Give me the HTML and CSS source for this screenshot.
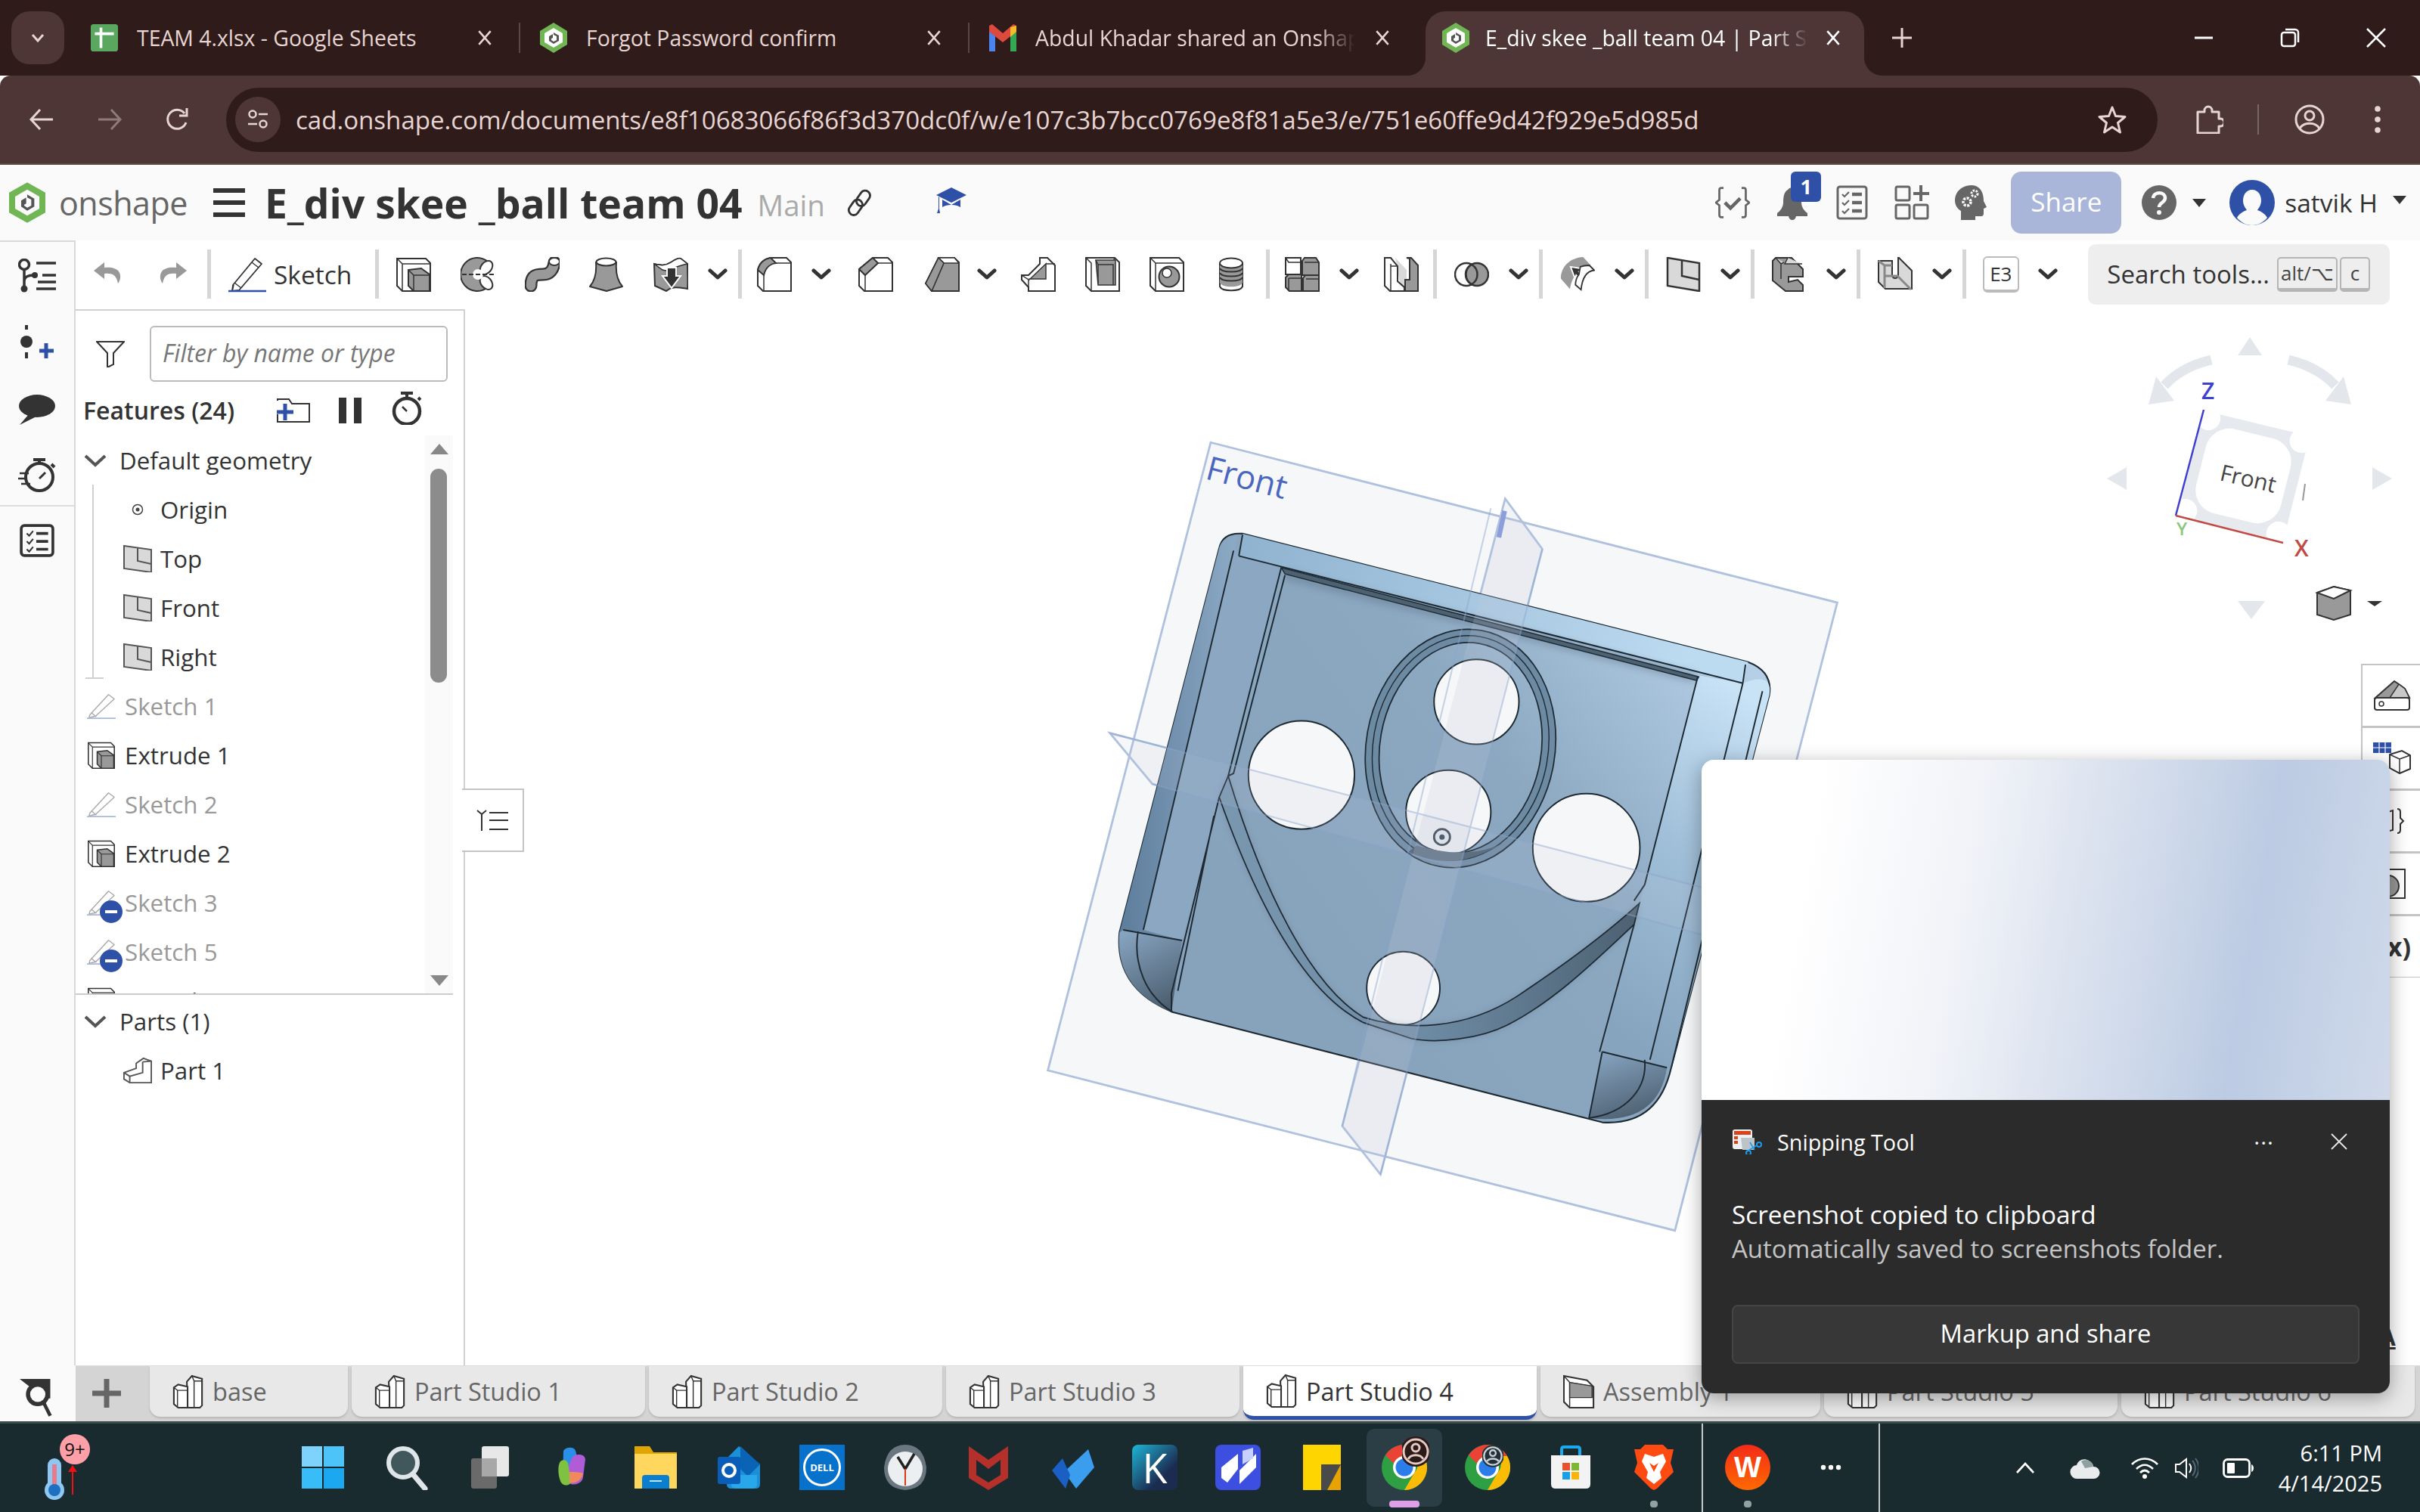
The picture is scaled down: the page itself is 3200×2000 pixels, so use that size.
FILE: index.html
```html
<!DOCTYPE html>
<html lang="en">
<head>
  <meta charset="UTF-8" />
  <title>E_div skee _ball team 04 | Part Studio 4</title>
  <link rel="stylesheet" href="styles.css">
</head>
<body>

  <!-- icon sheet -->
  <svg class="sprites" aria-hidden="true">
    <defs>
      <symbol id="fav-sheets" viewBox="0 0 40 40"><rect width="40" height="40" rx="4" fill="#5aa860"/><path d="M6 14h28M15 5v30" stroke="#fff" stroke-width="4"/></symbol>
      <symbol id="fav-shape" viewBox="0 0 36 40"><path d="M18 0 36 11v18L18 40 0 29V11z" fill="#70b654"/><path d="M18 7 30 14v12L18 33 6 26V14z" fill="#fff"/><path d="M18 13l7 4v7l-7 4-6-4v-6l5-3v5l-2 1v2l3 2 4-2v-5l-4-2z" fill="#555"/></symbol>
      <symbol id="fav-gmail" viewBox="0 0 36 40"><path d="M0 10v28h8V18z" fill="#4a84ee"/><path d="M28 18v20h8V10z" fill="#35a853"/><path d="M0 4v8l18 14 18-14V4l-4-2-14 12L4 2z" fill="#dc4a3d"/><path d="M28 6l8-2v8l-8 7z" fill="#f4bb2a"/></symbol>
      <symbol id="x-mark" viewBox="0 0 20 20"><path d="M3 2l14 16M17 2 3 18" fill="none" stroke="currentColor" stroke-width="2.4"/></symbol>
      <symbol id="chev" viewBox="0 0 26 16"><path d="M3 3l10 9 10-9" fill="none" stroke="#333" stroke-width="5" stroke-linecap="round" stroke-linejoin="round"/></symbol>

      <symbol id="i-extrude" viewBox="0 0 46 46"><path d="M1 2h38l6 6v37H8l-7-7z" fill="#fff" stroke="#333" stroke-width="2"/><path d="M1 2l7 7h37M8 9v36" fill="none" stroke="#333" stroke-width="1.5"/><path d="M16 17l17-2 11 8v22H23l-7-7z" fill="#999" stroke="#333" stroke-width="2"/><path d="M16 17l7 7h21M23 24v21" fill="none" stroke="#333" stroke-width="1.5"/></symbol>
      <symbol id="i-revolve" viewBox="0 0 46 46"><path d="M36 6A22 22 0 1 0 36 40L22 23z" fill="#999" stroke="#333" stroke-width="2"/><ellipse cx="34" cy="14" rx="7" ry="10" transform="rotate(40 34 14)" fill="#fff" stroke="#333" stroke-width="2"/><ellipse cx="34" cy="34" rx="7" ry="10" transform="rotate(-40 34 34)" fill="#fff" stroke="#333" stroke-width="2"/><circle cx="23" cy="23" r="7" fill="#fff"/><path d="M2 23h44" stroke="#333" stroke-width="2" stroke-dasharray="6 3"/></symbol>
      <symbol id="i-sweep" viewBox="0 0 46 46"><path d="M8 38C8 24 14 23 24 23 33 23 38 17 39 7" fill="none" stroke="#333" stroke-width="17" stroke-linecap="round"/><path d="M8 38C8 24 14 23 24 23 33 23 38 17 39 7" fill="none" stroke="#999" stroke-width="12.5" stroke-linecap="round"/><ellipse cx="39" cy="6" rx="7" ry="5" fill="#fff" stroke="#333" stroke-width="2"/></symbol>
      <symbol id="i-loft" viewBox="0 0 46 46"><path d="M9 7c1 12-1 24-8 32l22 6 21-6C37 31 35 19 36 7z" fill="#999" stroke="#333" stroke-width="2" stroke-linejoin="round"/><ellipse cx="22.500" cy="6.500" rx="13" ry="5" fill="#fff" stroke="#333" stroke-width="2"/></symbol>
      <symbol id="i-thicken" viewBox="0 0 46 46"><path d="M1 9c10 2 14 3 22-2 5-3 9-6 13-5l9 7c0 12 1 25 0 33-12-2-20-4-28 3L2 38z" fill="#999" stroke="#333" stroke-width="2"/><path d="M1 9c10 2 14 3 22-2 5-3 9-6 13-5l9 7c-8 2-14 3-20 7-3 2-7 3-13 1z" fill="#fff" stroke="#333" stroke-width="1.500"/><path d="M18 14h12v11h6L24 41 12 25h6z" fill="#333" stroke="#fff" stroke-width="2"/></symbol>
      <symbol id="i-fillet" viewBox="0 0 46 46"><path d="M1 17C3 8 10 2 18 1h21l6 6v38H8l-7-7z" fill="#fff" stroke="#333" stroke-width="2"/><path d="M1 17C3 8 10 2 18 1l7 7c-8 1-14 7-16 16z" fill="#999" stroke="#333" stroke-width="2"/><path d="M25 8h20M9 24v21" stroke="#333" stroke-width="1.500"/></symbol>
      <symbol id="i-chamfer" viewBox="0 0 46 46"><path d="M1 16 19 1h20l6 6v38H8l-7-7z" fill="#fff" stroke="#333" stroke-width="2"/><path d="M1 16 19 1l7 7L9 24z" fill="#999" stroke="#333" stroke-width="2"/><path d="M26 8h19M9 24v21" stroke="#333" stroke-width="1.500"/></symbol>
      <symbol id="i-draft" viewBox="0 0 46 46"><path d="M1 35 18 1h21l6 6v38H9z" fill="#999" stroke="#333" stroke-width="2"/><path d="M18 1l7 7h20l-6-7zM18 1l7 7L9 45 1 35z" fill="#fff" stroke="#333" stroke-width="1.500"/><path d="M18 1l7 7L9 45 1 35z" fill="#999" stroke="#333" stroke-width="1.500"/></symbol>
      <symbol id="i-rib" viewBox="0 0 46 46"><path d="M1 24V30l9 10v5h35V11L35 1H25v8L10 24z" fill="#fff" stroke="#333" stroke-width="2"/><path d="M11 30 33 9v20H11z" fill="#999" stroke="#333" stroke-width="1.500"/><path d="M1 24l9 6v15M33 9h12" fill="none" stroke="#333" stroke-width="1.500"/></symbol>
      <symbol id="i-shell" viewBox="0 0 46 46"><path d="M1 1h38l6 6v38H8l-7-7z" fill="#fff" stroke="#333" stroke-width="2"/><path d="M1 1l7 7v37M39 1l-3 7" fill="none" stroke="#333" stroke-width="1.500"/><path d="M14 4h26v33H17z" fill="#999" stroke="#333" stroke-width="1.500"/><path d="M14 4l3 6h20v27M17 10v25" fill="none" stroke="#333" stroke-width="1.500"/></symbol>
      <symbol id="i-hole" viewBox="0 0 46 46"><path d="M1 1h38l6 6v38H8l-7-7z" fill="#fff" stroke="#333" stroke-width="2"/><path d="M1 1l7 7h37M8 8v37" fill="none" stroke="#333" stroke-width="1.500"/><circle cx="26" cy="26" r="13.500" fill="#999" stroke="#333" stroke-width="2"/><circle cx="23" cy="21" r="6" fill="#fff" stroke="#333" stroke-width="1.500"/></symbol>
      <symbol id="i-thread" viewBox="0 0 46 46"><path d="M8 8v31c3 7 27 7 30 0V8" fill="#fff" stroke="#333" stroke-width="2"/><path d="M8 10v24c3 7 27 7 30 0V10z" fill="#999"/><path d="M8 15c3 6 27 6 30 0M8 21c3 6 27 6 30 0M8 27c3 6 27 6 30 0" fill="none" stroke="#333" stroke-width="2"/><ellipse cx="23" cy="8" rx="15" ry="6.500" fill="#fff" stroke="#333" stroke-width="2"/></symbol>
      <symbol id="i-pattern" viewBox="0 0 46 46"><path d="M1 1h20v22H1z" fill="#fff" stroke="#333" stroke-width="2"/><path d="M23 5l3-4h15l4 6v17H23z M1 27l4-4h17v22H6l-5-5z M24 28l3-4h18v21H24z" fill="#999" stroke="#333" stroke-width="2"/><path d="M1 1l4 6h17M26 7h19M5 28h17M5 28v17M28 29h17" fill="none" stroke="#333" stroke-width="1.500"/></symbol>
      <symbol id="i-split" viewBox="0 0 46 46"><path d="M15 1l15 16v28H23z" fill="#d9d9d9"/><path d="M1 1h8l9 11v20l9 8v5H8l-7-7z" fill="#fff" stroke="#333" stroke-width="2"/><path d="M30 1h6l9 10v34H28V30h6V2z" fill="#999" stroke="#333" stroke-width="2"/><path d="M9 9v36M18 12H9" fill="none" stroke="#333" stroke-width="1.500"/></symbol>
      <symbol id="i-bool" viewBox="0 0 46 46"><circle cx="16" cy="23" r="15" fill="#fff" stroke="#333" stroke-width="2.500"/><circle cx="30" cy="23" r="15" fill="#999" stroke="#333" stroke-width="2.500"/><path d="M23 10a15 15 0 0 1 0 26 15 15 0 0 1 0-26z" fill="#999" stroke="#333" stroke-width="2.500"/></symbol>
      <symbol id="i-transform" viewBox="0 0 50 50"><path d="M14 46 1 31C1 14 14 1 33 0l11 12C34 13 19 20 14 46z" fill="#999"/><path d="M21 30l-6-16 18 3-6 4 9 9-5 5-8-9z" fill="#333" stroke="#fff" stroke-width="2"/><path d="M29 14c5-2 9-2 13-2l7 7c-10 1-17 9-19 28l-8-7c0-7 2-11 5-15z" fill="#fff" stroke="#333" stroke-width="2"/></symbol>
      <symbol id="i-plane" viewBox="0 0 46 46"><path d="M2 1l42 7v37L2 38z" fill="#d9d9d9" stroke="#333" stroke-width="2.500"/><path d="M21 4v21l23 5" fill="none" stroke="#333" stroke-width="2.500"/></symbol>
      <symbol id="i-frame" viewBox="0 0 46 46"><path d="M1 5l4-4h21l15 15v10H22v7l12-3 7 7v8H18L1 31z" fill="#999" stroke="#333" stroke-width="2"/><path d="M5 1l7 8 4-2M12 9v20M21 1l-4 8h23" fill="#d9d9d9" stroke="#333" stroke-width="1.500"/></symbol>
      <symbol id="i-sheet" viewBox="0 0 46 46"><path d="M1 5h18v20c2 4 6 4 8 0V0l18 18v24H10L1 33z" fill="#d9d9d9" stroke="#333" stroke-width="2"/><path d="M1 5l8 6v30M9 11h10M10 25h16l18 18" fill="none" stroke="#888" stroke-width="3"/></symbol>

      <symbol id="i-sketch" viewBox="0 0 50 48"><path d="M6 38 35 3l9 7-30 35-9 1z" fill="#fff" stroke="#333" stroke-width="1.800" stroke-linejoin="round"/><path d="M8 35l9 7M31 8l9 7M5 46l2-8" fill="none" stroke="#333" stroke-width="1.500"/><path d="M0 46h50" stroke="#2e50a6" stroke-width="2.500"/></symbol>
      <symbol id="i-undo" viewBox="0 0 36 36"><path d="M14 2 0 13l14 11v-7c8-1 16 0 18 13 4-5 4-12 1-16-3-4-10-6-19-5z" fill="#999"/></symbol>
      <symbol id="i-studio" viewBox="0 0 44 46"><path d="M20 9l7-8 14 4v37l-3 3H21z" fill="#fff" stroke="#333" stroke-width="2.200"/><path d="M27 1l3 7h11M30 8v37" fill="none" stroke="#333" stroke-width="1.500"/><path d="M2 17l6-4 13 3v29H8l-6-5z" fill="#fff" stroke="#333" stroke-width="2.200"/><path d="M2 17l5 4h14M7 21v24" fill="none" stroke="#333" stroke-width="1.500"/></symbol>
      <symbol id="i-assembly" viewBox="0 0 44 46"><path d="M1 1l32 6 9 9v29H9l-8-8z" fill="#fff" stroke="#333" stroke-width="2.200"/><path d="M1 1l8 9v35M9 10l33 6" fill="none" stroke="#333" stroke-width="1.500"/><path d="M9 10l31 5v16H9z" fill="#999" stroke="#333" stroke-width="1.500"/></symbol>
      <symbol id="i-plane-small" viewBox="0 0 38 36"><path d="M1 1l36 5v30L1 31z" fill="#d9d9d9" stroke="#555" stroke-width="2"/><path d="M19 4v17l18 4" fill="none" stroke="#555" stroke-width="2"/></symbol>
      <symbol id="i-sketch-dim" viewBox="0 0 40 36"><path d="M4 30 30 2l8 6-26 24-9 2z" fill="#fff" stroke="#aaa" stroke-width="1.500" stroke-linejoin="round"/><path d="M6 27l7 6" stroke="#aaa" stroke-width="1.500"/><path d="M0 35h40" stroke="#a9b8dc" stroke-width="2"/></symbol>
      <symbol id="i-part" viewBox="0 0 40 36"><path d="M1 21l17-6V8l10-7 11 4v30H9l-8-5z" fill="#fff" stroke="#555" stroke-width="2"/><path d="M1 21l8 5 18-5V6M9 26v9M27 6l12-1" fill="none" stroke="#555" stroke-width="2"/></symbol>
    </defs>
  </svg>

  <!-- browser tabs -->
  <div class="tabstrip">
    <div class="tab-menu"><svg class="tab-menu-chev" viewBox="0 0 20 14"><path d="M3 3l7 8 7-8" fill="none" stroke="#e6d5d2" stroke-width="3"/></svg></div>
    <div class="tab tab-first">
      <svg class="favicon"><use href="#fav-sheets"/></svg>
      <span class="tab-title">TEAM 4.xlsx - Google Sheets</span>
      <svg class="tab-close"><use href="#x-mark"/></svg>
    </div>
    <div class="tab">
      <svg class="favicon"><use href="#fav-shape"/></svg>
      <span class="tab-title">Forgot Password confirm</span>
      <svg class="tab-close"><use href="#x-mark"/></svg>
    </div>
    <div class="tab tab-last">
      <svg class="favicon"><use href="#fav-gmail"/></svg>
      <span class="tab-title tab-fade">Abdul Khadar shared an Onshape document</span>
      <svg class="tab-close"><use href="#x-mark"/></svg>
    </div>
    <div class="tab tab-active">
      <svg class="favicon"><use href="#fav-shape"/></svg>
      <span class="tab-title tab-fade">E_div skee _ball team 04 | Part Studio 4</span>
      <svg class="tab-close"><use href="#x-mark"/></svg>
    </div>
    <svg class="tab-new" viewBox="0 0 28 28"><path d="M14 1v26M1 14h26" stroke="#e6d5d2" stroke-width="3"/></svg>
    <div class="win-controls">
      <svg class="win-btn" viewBox="0 0 28 28"><path d="M2 14h24" stroke="#fff" stroke-width="3"/></svg>
      <svg class="win-btn" viewBox="0 0 28 28"><rect x="3" y="7" width="18" height="18" rx="3" fill="none" stroke="#fff" stroke-width="2.500"/><path d="M8 3h13a4 4 0 0 1 4 4v13" fill="none" stroke="#fff" stroke-width="2.500"/></svg>
      <svg class="win-btn" viewBox="0 0 28 28"><path d="M2 2l24 24M26 2 2 26" stroke="#fff" stroke-width="2.500"/></svg>
    </div>
  </div>

  <!-- browser toolbar -->
  <div class="urlbar">
    <svg class="nav-btn" viewBox="0 0 34 34"><path d="M32 17H4M15 4 3 17l12 13" fill="none" stroke="#e6d5d2" stroke-width="3"/></svg>
    <svg class="nav-btn" viewBox="0 0 34 34"><path d="M2 17h28M19 4l12 13-12 13" fill="none" stroke="#8f7a78" stroke-width="3"/></svg>
    <svg class="nav-btn" viewBox="0 0 34 34"><path d="M28 21a12.500 12.500 0 1 1-2-12" fill="none" stroke="#e6d5d2" stroke-width="3"/><path d="M29 2v10H19" fill="none" stroke="#e6d5d2" stroke-width="3"/></svg>
    <div class="omnibox">
      <div class="site-chip">
        <svg class="site-chip-icon" viewBox="0 0 30 30"><circle cx="8" cy="8" r="4.500" fill="none" stroke="#e6d5d2" stroke-width="2.500"/><path d="M16 8h12M2 21h12" stroke="#e6d5d2" stroke-width="2.500"/><circle cx="22" cy="21" r="4.500" fill="none" stroke="#e6d5d2" stroke-width="2.500"/></svg>
      </div>
      <span class="url-text">cad.onshape.com/documents/e8f10683066f86f3d370dc0f/w/e107c3b7bcc0769e8f81a5e3/e/751e60ffe9d42f929e5d985d</span>
      <svg class="star" viewBox="0 0 38 38"><path d="M19 3l4.500 11.500L36 15.500l-9.500 8L29.500 36 19 29 8.500 36l3-12.500-9.500-8 12.500-1z" fill="none" stroke="#e6d5d2" stroke-width="3" stroke-linejoin="round"/></svg>
    </div>
    <svg class="ext-icon" viewBox="0 0 38 38"><path d="M4 9h9V7a5 5 0 0 1 10 0v2h9v9h2a5 5 0 0 1 0 10h-2v9H4z" fill="none" stroke="#e6d5d2" stroke-width="3" stroke-linejoin="round"/></svg>
    <div class="urlbar-sep"></div>
    <svg class="profile-icon" viewBox="0 0 40 40"><circle cx="20" cy="20" r="18" fill="none" stroke="#e6d5d2" stroke-width="3"/><circle cx="20" cy="15" r="6" fill="none" stroke="#e6d5d2" stroke-width="3"/><path d="M7 32c5-9 21-9 26 0" fill="none" stroke="#e6d5d2" stroke-width="3"/></svg>
    <svg class="dots-icon" viewBox="0 0 10 40"><circle cx="5" cy="6" r="3.800" fill="#e6d5d2"/><circle cx="5" cy="20" r="3.800" fill="#e6d5d2"/><circle cx="5" cy="34" r="3.800" fill="#e6d5d2"/></svg>
  </div>

  <!-- onshape header -->
  <div class="appbar">
    <svg class="logo-mark" viewBox="0 0 36 40"><path d="M18 0 36 10v20L18 40 0 30V10z" fill="#70b654"/><path d="M18 7 30 14v12L18 33 6 26V14z" fill="#fafafa"/><path d="M18 12l7 4v8l-7 4-6-4v-6l5-3v6l-2 1v1l3 2 4-2v-6l-4-2z" fill="#555"/></svg>
    <span class="logo-word">onshape</span>
    <svg class="burger" viewBox="0 0 42 38"><path d="M0 3h42M0 19h42M0 35h42" stroke="#333" stroke-width="6"/></svg>
    <span class="doc-title">E_div skee _ball team 04</span>
    <span class="doc-branch">Main</span>
    <svg class="link-icon" viewBox="0 0 36 36"><rect x="16" y="1" width="13" height="22" rx="6.500" transform="rotate(35 22 12)" fill="none" stroke="#333" stroke-width="2.800"/><rect x="6" y="13" width="13" height="22" rx="6.500" transform="rotate(35 12 24)" fill="none" stroke="#333" stroke-width="2.800"/></svg>
    <svg class="cap-icon" viewBox="0 0 40 36"><path d="M20 1 40 11 20 21 0 11z" fill="#2e50a6"/><path d="M8 17v10c6-4 18-4 24 0V17L20 24zM3 13v16l-2 6h4l-1-6V14z" fill="#2e50a6"/></svg>

    <div class="app-actions">
      <svg class="hdr-icon" viewBox="0 0 50 46"><path d="M12 2H9Q6 2 6 5v14l-5 4 5 4v14q0 3 3 3h3M38 2h3q3 0 3 3v14l5 4-5 4v14q0 3-3 3h-3" fill="none" stroke="#666" stroke-width="3"/><path d="M14 23l8 8 14-14" fill="none" stroke="#666" stroke-width="5"/></svg>
      <div class="bell-wrap">
        <svg class="hdr-icon" viewBox="0 0 44 46"><path d="M16 6c3-4 9-4 12 0 5 3 6 9 6 17 0 6 4 11 8 14v4H2v-4c4-3 8-8 8-14 0-8 1-14 6-17z" fill="#666"/><path d="M17 41h10q-1 5-5 5t-5-5z" fill="#666"/></svg>
        <span class="bell-badge">1</span>
      </div>
      <svg class="hdr-icon" viewBox="0 0 42 46"><rect x="2" y="2" width="38" height="42" rx="3" fill="none" stroke="#666" stroke-width="3"/><path d="M8 12l3 3 6-6M8 23l3 3 6-6M8 34l3 3 6-6" fill="none" stroke="#666" stroke-width="2.200"/><path d="M21 12h13M21 23h13M21 34h13" stroke="#666" stroke-width="4.500"/></svg>
      <svg class="hdr-icon" viewBox="0 0 46 46"><rect x="2" y="2" width="18" height="18" rx="2" fill="none" stroke="#666" stroke-width="3"/><rect x="2" y="26" width="18" height="18" rx="2" fill="none" stroke="#666" stroke-width="3"/><rect x="26" y="26" width="18" height="18" rx="2" fill="none" stroke="#666" stroke-width="3"/><path d="M35 0v21M25 11h21" stroke="#666" stroke-width="4"/></svg>
      <svg class="hdr-icon" viewBox="0 0 44 46"><path d="M22 0C10 0 0 8 0 20c0 6 3 11 8 14v12h19v-5h8q3 0 3-4v-6l4-2-4-8C38 8 32 0 22 0z" fill="#666"/><circle cx="16" cy="22" r="5" fill="none" stroke="#fafafa" stroke-width="3.500" stroke-dasharray="3 1.500"/><circle cx="26" cy="11" r="4" fill="none" stroke="#fafafa" stroke-width="3" stroke-dasharray="2.500 1.500"/></svg>
      <div class="share-btn">Share</div>
      <svg class="help-icon" viewBox="0 0 46 46"><circle cx="23" cy="23" r="23" fill="#666"/><path d="M15 17c1-9 16-9 16 0 0 6-8 6-8 12" fill="none" stroke="#fafafa" stroke-width="4.500"/><circle cx="23" cy="36" r="3" fill="#fafafa"/></svg>
      <span class="caret caret-help"></span>
      <svg class="avatar" viewBox="0 0 60 60"><circle cx="30" cy="30" r="30" fill="#2e50a6"/><path d="M30 13c8 0 12 7 12 14 0 6-3 10-5 13 6 2 11 6 13 10-5 6-12 10-20 10S15 56 10 50c2-4 7-8 13-10-2-3-5-7-5-13 0-7 4-14 12-14z" fill="#fafafa"/></svg>
      <span class="user-name">satvik H</span>
      <span class="caret caret-user"></span>
    </div>
  </div>

  <div class="main">
    <!-- left rail -->
    <aside class="rail">
      <div class="rail-top">
        <svg class="rail-icon" viewBox="0 0 50 46"><circle cx="8" cy="8" r="6.500" fill="none" stroke="#333" stroke-width="3.500"/><path d="M8 15v24M8 30c0-6 6-8 12-8" fill="none" stroke="#333" stroke-width="3.500"/><circle cx="8" cy="40" r="4.500" fill="#333"/><circle cx="22" cy="22" r="4" fill="#333"/><path d="M24 6h26M32 22h18M24 40h26M26 31h24" stroke="#333" stroke-width="3.500"/></svg>
        <svg class="rail-icon" viewBox="0 0 50 46"><circle cx="11" cy="22" r="8" fill="#333"/><path d="M11 0v6M11 36v8" stroke="#333" stroke-width="4"/><path d="M28 34h19M37 24v20" stroke="#2e50a6" stroke-width="5"/></svg>
        <svg class="rail-icon" viewBox="0 0 50 46"><ellipse cx="25" cy="19" rx="24" ry="15" fill="#333"/><path d="M14 30 2 44l22-11z" fill="#333"/></svg>
        <svg class="rail-icon" viewBox="0 0 50 46"><circle cx="28" cy="25" r="18" fill="none" stroke="#333" stroke-width="4"/><path d="M20 2h16M28 2v5M44 8l4 4" stroke="#333" stroke-width="4"/><path d="M28 27l8-8" stroke="#333" stroke-width="3"/><path d="M2 20h12M0 27h12M4 34h12" stroke="#333" stroke-width="2.500"/></svg>
      </div>
      <div class="rail-mid">
        <svg class="rail-icon" viewBox="0 0 44 44"><rect x="2" y="3" width="40" height="38" rx="4" fill="none" stroke="#333" stroke-width="3.500"/><path d="M9 13l3 3 5-6M9 23l3 3 5-6M9 33l3 3 5-6" fill="none" stroke="#333" stroke-width="2"/><path d="M21 13h15M21 23h15M21 33h15" stroke="#333" stroke-width="3.500"/></svg>
      </div>
      <svg class="rail-search" viewBox="0 0 50 56"><path d="M0 2h44v28H36M14 30H0z" fill="#333"/><circle cx="26" cy="24" r="14" fill="#fafafa" stroke="#333" stroke-width="6"/><path d="M34 35l10 20" stroke="#333" stroke-width="5"/></svg>
    </aside>

    <div class="studio">
      <!-- feature toolbar -->
      <div class="toolbar">
        <svg class="tb-undo"><use href="#i-undo"/></svg>
        <svg class="tb-undo tb-redo"><use href="#i-undo"/></svg>
        <div class="tb-sep tb-sep-first"></div>
        <svg class="tb-sketch-icon"><use href="#i-sketch"/></svg>
        <span class="tb-sketch-label">Sketch</span>
        <div class="tb-sep"></div>
        <div class="tb-btn"><svg class="tb-icon"><use href="#i-extrude"/></svg></div>
        <div class="tb-btn"><svg class="tb-icon"><use href="#i-revolve"/></svg></div>
        <div class="tb-btn"><svg class="tb-icon"><use href="#i-sweep"/></svg></div>
        <div class="tb-btn"><svg class="tb-icon"><use href="#i-loft"/></svg></div>
        <div class="tb-btn"><svg class="tb-icon"><use href="#i-thicken"/></svg></div>
        <div class="tb-drop"><svg class="tb-chev"><use href="#chev"/></svg></div>
        <div class="tb-sep tb-sep-a"></div>
        <div class="tb-btn"><svg class="tb-icon"><use href="#i-fillet"/></svg></div>
        <div class="tb-drop"><svg class="tb-chev"><use href="#chev"/></svg></div>
        <div class="tb-btn tb-gap-9"><svg class="tb-icon"><use href="#i-chamfer"/></svg></div>
        <div class="tb-btn tb-gap-3"><svg class="tb-icon"><use href="#i-draft"/></svg></div>
        <div class="tb-drop tb-drop-s"><svg class="tb-chev"><use href="#chev"/></svg></div>
        <div class="tb-btn tb-gap-8"><svg class="tb-icon"><use href="#i-rib"/></svg></div>
        <div class="tb-btn"><svg class="tb-icon"><use href="#i-shell"/></svg></div>
        <div class="tb-btn"><svg class="tb-icon"><use href="#i-hole"/></svg></div>
        <div class="tb-btn"><svg class="tb-icon"><use href="#i-thread"/></svg></div>
        <div class="tb-sep tb-sep-b"></div>
        <div class="tb-btn"><svg class="tb-icon"><use href="#i-pattern"/></svg></div>
        <div class="tb-drop"><svg class="tb-chev"><use href="#chev"/></svg></div>
        <div class="tb-btn tb-gap-6"><svg class="tb-icon"><use href="#i-split"/></svg></div>
        <div class="tb-sep tb-sep-c"></div>
        <div class="tb-btn"><svg class="tb-icon"><use href="#i-bool"/></svg></div>
        <div class="tb-drop"><svg class="tb-chev"><use href="#chev"/></svg></div>
        <div class="tb-sep"></div>
        <div class="tb-btn"><svg class="tb-icon"><use href="#i-transform"/></svg></div>
        <div class="tb-drop"><svg class="tb-chev"><use href="#chev"/></svg></div>
        <div class="tb-sep"></div>
        <div class="tb-btn"><svg class="tb-icon"><use href="#i-plane"/></svg></div>
        <div class="tb-drop"><svg class="tb-chev"><use href="#chev"/></svg></div>
        <div class="tb-sep"></div>
        <div class="tb-btn"><svg class="tb-icon"><use href="#i-frame"/></svg></div>
        <div class="tb-drop"><svg class="tb-chev"><use href="#chev"/></svg></div>
        <div class="tb-sep"></div>
        <div class="tb-btn"><svg class="tb-icon"><use href="#i-sheet"/></svg></div>
        <div class="tb-drop"><svg class="tb-chev"><use href="#chev"/></svg></div>
        <div class="tb-sep"></div>
        <div class="tb-btn"><div class="tb-e3">E3</div></div>
        <div class="tb-drop"><svg class="tb-chev"><use href="#chev"/></svg></div>
        <div class="search-tools">
          <span>Search tools...</span>
          <span class="kbd kbd-wide">alt/⌥</span>
          <span class="kbd">c</span>
        </div>
      </div>

      <div class="workspace">
        <!-- feature list -->
        <section class="panel">
          <div class="panel-filter">
            <svg class="filter-icon" viewBox="0 0 38 36"><path d="M1 2h36L23 17v15l-8 4V17z" fill="none" stroke="#333" stroke-width="2"/></svg>
            <div class="filter-input">Filter by name or type</div>
          </div>
          <div class="panel-head">
            <span class="panel-head-title">Features (24)</span>
            <svg class="folder-icon" viewBox="0 0 46 34"><path d="M2 4V2h15l4 6h23v24H2V22" fill="none" stroke="#333" stroke-width="2"/><path d="M12 8v22M1 19h22" stroke="#2e50a6" stroke-width="5"/></svg>
            <svg class="pause-icon" viewBox="0 0 30 34"><path d="M0 0h10v34H0zM20 0h10v34H20z" fill="#333"/></svg>
            <svg class="timer-icon" viewBox="0 0 40 44"><circle cx="20" cy="26" r="17" fill="none" stroke="#333" stroke-width="4.500"/><path d="M12 2h16M20 2v6M35 8l3 3" stroke="#333" stroke-width="4"/><path d="M20 26l-6-6" stroke="#333" stroke-width="2.500"/></svg>
          </div>
          <div class="tree">
            <div class="tree-scroll">
              <div class="row row-group"><svg class="row-chev" viewBox="0 0 30 18"><path d="M2 3l13 12L28 3" fill="none" stroke="#555" stroke-width="4"/></svg><span>Default geometry</span></div>
              <div class="guide"></div>
              <div class="row row-child"><svg class="row-origin" viewBox="0 0 16 16"><circle cx="8" cy="8" r="6.500" fill="none" stroke="#444" stroke-width="1.500"/><circle cx="8" cy="8" r="2.500" fill="#444"/></svg><span>Origin</span></div>
              <div class="row row-child"><svg class="row-icon"><use href="#i-plane-small"/></svg><span>Top</span></div>
              <div class="row row-child"><svg class="row-icon"><use href="#i-plane-small"/></svg><span>Front</span></div>
              <div class="row row-child"><svg class="row-icon"><use href="#i-plane-small"/></svg><span>Right</span></div>
              <div class="row row-dim"><svg class="row-icon"><use href="#i-sketch-dim"/></svg><span>Sketch 1</span></div>
              <div class="row"><svg class="row-icon"><use href="#i-extrude"/></svg><span>Extrude 1</span></div>
              <div class="row row-dim"><svg class="row-icon"><use href="#i-sketch-dim"/></svg><span>Sketch 2</span></div>
              <div class="row"><svg class="row-icon"><use href="#i-extrude"/></svg><span>Extrude 2</span></div>
              <div class="row row-dim"><svg class="row-icon"><use href="#i-sketch-dim"/></svg><i class="minus-badge"></i><span>Sketch 3</span></div>
              <div class="row row-dim"><svg class="row-icon"><use href="#i-sketch-dim"/></svg><i class="minus-badge"></i><span>Sketch 5</span></div>
              <div class="row"><svg class="row-icon"><use href="#i-extrude"/></svg><span>Extrude 3</span></div>
            </div>
            <div class="scrollbar">
              <i class="scroll-up"></i>
              <i class="scroll-thumb"></i>
              <i class="scroll-down"></i>
            </div>
          </div>
          <div class="parts">
            <div class="row row-group"><svg class="row-chev" viewBox="0 0 30 18"><path d="M2 3l13 12L28 3" fill="none" stroke="#555" stroke-width="4"/></svg><span>Parts (1)</span></div>
            <div class="row row-child"><svg class="row-icon"><use href="#i-part"/></svg><span>Part 1</span></div>
          </div>
          <div class="panel-toggle"><svg viewBox="0 0 42 28" class="panel-toggle-icon"><path d="M1 1l6 5 6-5M7 6v22M17 4h25M17 14h25M17 26h25" fill="none" stroke="#333" stroke-width="2"/></svg></div>
        </section>

        <!-- graphics area -->
        <section class="viewport">
          <svg class="scene" viewBox="615 409 2585 1397" preserveAspectRatio="xMinYMin">
            <defs>
              <linearGradient id="face" x1="0.2" y1="0.7" x2="0.95" y2="0.2"><stop offset="0" stop-color="#87a2bb"/><stop offset="0.55" stop-color="#8ca8c1"/><stop offset="1" stop-color="#b4cfe6"/></linearGradient>
              <linearGradient id="wall-l" x1="0" y1="0" x2="1" y2="0"><stop offset="0" stop-color="#5c7c9b"/><stop offset="1" stop-color="#8daac5"/></linearGradient>
              <linearGradient id="wall-top" x1="0" y1="0" x2="1" y2="0.2"><stop offset="0" stop-color="#8fb2cf"/><stop offset="1" stop-color="#bcdaf0"/></linearGradient>
              <linearGradient id="wall-r" x1="0.7" y1="0" x2="0.4" y2="1"><stop offset="0" stop-color="#c8e2f6"/><stop offset="0.5" stop-color="#9ebdd6"/><stop offset="1" stop-color="#86a4be"/></linearGradient>
              <linearGradient id="corner" x1="0.2" y1="0" x2="0.6" y2="1"><stop offset="0" stop-color="#86a3bf"/><stop offset="1" stop-color="#4c5f70"/></linearGradient>
              <linearGradient id="rib" x1="0" y1="0" x2="1" y2="0"><stop offset="0" stop-color="#7a97b0"/><stop offset="0.5" stop-color="#6d8aa3"/><stop offset="1" stop-color="#4c6172"/></linearGradient>
              <filter id="soft"><feGaussianBlur stdDeviation="7"/></filter>
            </defs>
            <g transform="translate(1340 560) scale(.7015)">
              <path d="M372 36 1553 338 1247 1522 65 1220z" fill="#f6f7f9" stroke="#afc1de" stroke-width="4"/>
              <text class="front-label" transform="translate(360 104) rotate(14.500)">Front</text>
              <path d="M927 142 997 237 692 1416 620 1325z" fill="none" stroke="#afc1de" stroke-width="4"/>
              <path d="M182 584 1700 980 1720 1080 262 680z" fill="none" stroke="#afc1de" stroke-width="4"/>
              <path d="M915 215 926 165" stroke="#7d93dc" stroke-width="9"/>

              <!-- body -->
              <path d="M388 235Q395 205 432 208L1385 450Q1432 468 1425 512L1240 1215Q1215 1325 1110 1318L300 1110Q190 1065 200 960z" fill="url(#face)" stroke="#1e2a33" stroke-width="3"/>
              <path d="M388 235Q395 212 420 215L318 975 200 960z" fill="url(#wall-l)"/>
              <path d="M415 240 505 275 318 975 245 955z" fill="#8ba7c2"/>
              <path d="M432 208 1385 450 1375 490 425 250z" fill="url(#wall-top)"/>
              <path d="M1290 475 1375 490Q1432 468 1425 512L1240 1215 1110 1185 1190 870z" fill="url(#wall-r)"/>
              <path d="M207 955 318 975 298 1110Q190 1065 200 960z" fill="url(#corner)"/>
              <path d="M1110 1185 1232 1215Q1215 1325 1085 1310z" fill="url(#corner)"/>

              <path d="M510 285 1285 480" stroke="#4a5f70" stroke-width="20" filter="url(#soft)" opacity=".3"/>
              <path d="M505 272 1292 478 1288 485 512 284z" fill="#4c6172" stroke="#1e2a33" stroke-width="2"/>

              <g fill="none" stroke="#1e2a33" stroke-width="2.800">
                <path d="M415 240 245 955M425 250 1375 490M432 210 425 250"/>
                <path d="M505 272 405 665 415 660 512 286"/>
                <path d="M1290 478 1190 870 1170 900"/>
                <path d="M1375 490 1200 1200M1412 505 1240 1215M1380 455 1375 490"/>
                <path d="M207 955 318 975M235 958C225 1020 250 1080 300 1110"/>
                <path d="M1110 1185 1232 1215M1190 1200C1195 1250 1160 1300 1085 1310M1110 1185 1085 1310"/>
                <path d="M388 705 298 1075 298 1110M378 740 310 1070"/>
                <path d="M1170 945 1105 1185"/>
              </g>

              <!-- holes -->
              <g fill="#f6f7f9" stroke="#1e2a33" stroke-width="2.800">
                <ellipse cx="543" cy="663" rx="100" ry="102"/>
                <ellipse cx="873" cy="525" rx="80" ry="80"/>
                <ellipse cx="820" cy="733" rx="80" ry="79"/>
                <ellipse cx="1080" cy="800" rx="101" ry="102"/>
                <ellipse cx="735" cy="1065" rx="69" ry="69"/>
              </g>

              <!-- oval boss -->
              <g transform="rotate(10 843 612)" fill="none">
                <ellipse cx="843" cy="612" rx="165" ry="213" stroke="#6d8aa3" stroke-width="26"/>
                <ellipse cx="843" cy="613" rx="178" ry="226" stroke="#1e2a33" stroke-width="2.500"/>
                <ellipse cx="843" cy="612" rx="165" ry="213" stroke="#1e2a33" stroke-width="2"/>
                <ellipse cx="843" cy="612" rx="152" ry="200" stroke="#1e2a33" stroke-width="2.500"/>
              </g>
              <path d="M745 808Q830 850 925 790 860 825 760 796z" fill="#4c6172"/>
              <circle cx="808" cy="780" r="15" fill="#e9edf2" stroke="#1e2a33" stroke-width="4"/>
              <circle cx="808" cy="780" r="5" fill="#1e2a33"/>

              <!-- smile rib -->
              <path d="M405 665C470 880 560 1060 660 1120 740 1145 850 1145 950 1080 1040 1020 1120 960 1180 905L1170 945C1100 1010 1020 1090 930 1135 880 1160 800 1170 750 1160L660 1130C540 1070 450 880 388 705z" fill="#4c6172" filter="url(#soft)" opacity=".3"/>
              <path d="M405 665C470 880 560 1060 660 1120 740 1145 850 1145 950 1080 1040 1020 1120 960 1180 905L1170 945C1100 1010 1020 1090 930 1135 880 1160 800 1170 750 1160L660 1130C540 1070 450 880 388 705z" fill="url(#rib)" stroke="#1e2a33" stroke-width="2.500"/>

              <!-- planes seen through the part -->
              <path d="M927 142 997 237 692 1416 620 1325z" fill="#bec9dc" fill-opacity=".22"/>
              <path d="M182 584 1700 980 1720 1080 262 680z" fill="#bec9dc" fill-opacity=".14"/>
              <path d="M900 160 620 1325M997 237 692 1416M182 584 1700 980M262 680 1720 1080" stroke="#8aa3cc" stroke-width="3" stroke-opacity=".45" fill="none"/>
            </g>

            <!-- view cube -->
            <g class="gizmo">
              <path d="M2862 510Q2885 485 2924 476M3088 510Q3065 485 3026 476" fill="none" stroke="#e3e7ec" stroke-width="13"/>
              <path d="M2841 535 2851 498 2875 530zM3109 535 3099 498 3075 530z" fill="#e3e7ec"/>
              <path d="M2975 446l16 24h-32zM2959 795h36l-18 24zM2812 618v30l-26-15zM3137 618v30l26-15z" fill="#e3e7ec"/>
              <g transform="matrix(1.4 .34 .35 -1.39 2879 682)">
                <rect width="100" height="100" fill="#e6eaef"/>
                <rect x="10" y="10" width="80" height="80" rx="22" fill="#fff"/>
                <circle cx="6" cy="6" r="11" fill="#fff"/><circle cx="94" cy="6" r="11" fill="#fff"/><circle cx="94" cy="94" r="11" fill="#fff"/><circle cx="6" cy="94" r="11" fill="#fff"/>
              </g>
              <path d="M2877 682 2914 542" stroke="#3f3fd0" stroke-width="2.500"/>
              <path d="M2877 682 3019 718" stroke="#c04a44" stroke-width="2.500"/>
              <path d="M3048 640l-3 22" stroke="#999" stroke-width="2"/>
              <text class="gizmo-z" x="2911" y="528">Z</text>
              <text class="gizmo-x" x="3034" y="736">X</text>
              <text class="gizmo-y" x="2878" y="708">Y</text>
              <text class="gizmo-front" transform="translate(2934 635) rotate(13)">Front</text>
              <path d="M3064 784l22-8 22 5v32l-22 7-22-7z" fill="#999" stroke="#333" stroke-width="2"/>
              <path d="M3064 784l22 8 22-11-22-5z" fill="#fff" stroke="#333" stroke-width="2"/>
              <path d="M3130 795h20l-10 7z" fill="#333"/>
              <text class="side-a" x="3147" y="1780">A</text>
            </g>
          </svg>

          <div class="side-stack">
            <div class="side-btn"><svg class="side-icon" viewBox="0 0 50 42"><path d="M3 24 28 2l6 4 8 6 6 12z" fill="#999" stroke="#333" stroke-width="2"/><path d="M22 24 34 6l8 6 6 12z" fill="#c8c8c8" stroke="#333" stroke-width="1.500"/><rect x="2" y="24" width="46" height="16" rx="3" fill="#fff" stroke="#333" stroke-width="2"/><circle cx="11" cy="32" r="3" fill="none" stroke="#333" stroke-width="1.500"/></svg></div>
            <div class="side-btn"><svg class="side-icon" viewBox="0 0 50 42"><path d="M22 16l16-5 11 6v18l-14 6-13-7z" fill="#fff" stroke="#333" stroke-width="2"/><path d="M22 16l13 6v19M35 22l14-5" fill="none" stroke="#333" stroke-width="1.500"/><path d="M0 0h24v14H0z" fill="#2e50a6"/><path d="M8 0v14M16 0v14M0 7h24" stroke="#fff" stroke-width="1.200"/></svg></div>
            <div class="side-btn"><svg class="side-icon" viewBox="0 0 50 42"><path d="M4 14l22-7v26L4 38zM32 5q4 0 4 4v8l4 4-4 4v8q0 4-4 4" fill="none" stroke="#333" stroke-width="2"/></svg></div>
            <div class="side-btn"><svg class="side-icon" viewBox="0 0 50 42"><path d="M2 2h40v38H2z" fill="#fff" stroke="#333" stroke-width="2"/><circle cx="20" cy="24" r="14" fill="#999" stroke="#333" stroke-width="2"/></svg></div>
            <div class="side-btn side-var">(x)</div>
          </div>
        </section>
      </div>
    </div>
  </div>

  <!-- document tabs -->
  <nav class="doc-tabs">
    <div class="doc-add"><svg class="doc-add-icon" viewBox="0 0 38 38"><path d="M19 0v38M0 19h38" stroke="#666" stroke-width="7"/></svg></div>
    <div class="doc-tab doc-tab-base"><svg class="doc-icon"><use href="#i-studio"/></svg>base</div>
    <div class="doc-tab"><svg class="doc-icon"><use href="#i-studio"/></svg>Part Studio 1</div>
    <div class="doc-tab"><svg class="doc-icon"><use href="#i-studio"/></svg>Part Studio 2</div>
    <div class="doc-tab"><svg class="doc-icon"><use href="#i-studio"/></svg>Part Studio 3</div>
    <div class="doc-tab doc-tab-on"><svg class="doc-icon"><use href="#i-studio"/></svg>Part Studio 4</div>
    <div class="doc-tab doc-tab-asm"><svg class="doc-icon"><use href="#i-assembly"/></svg>Assembly 1</div>
    <div class="doc-tab"><svg class="doc-icon"><use href="#i-studio"/></svg>Part Studio 5</div>
    <div class="doc-tab"><svg class="doc-icon"><use href="#i-studio"/></svg>Part Studio 6</div>
  </nav>

  <!-- windows taskbar -->
  <footer class="taskbar">
    <div class="weather">
      <svg class="weather-icon" viewBox="0 0 64 74"><rect x="8" y="18" width="18" height="42" rx="9" fill="#8ec8f2"/><circle cx="17" cy="60" r="13" fill="#8ec8f2"/><rect x="14" y="26" width="6" height="34" fill="#e87a8a"/><circle cx="17" cy="60" r="8" fill="#1f6fc0"/><path d="M40 66V36h-5l6-9 6 9h-5v30z" fill="#f01010"/></svg>
      <span class="weather-badge">9+</span>
    </div>
    <div class="task-apps">
      <div class="app"><svg class="app-icon" viewBox="0 0 60 60"><path d="M2 2h27v27H2z" fill="#7dd3fb"/><path d="M31 2h27v27H31z" fill="#4cc4fa"/><path d="M2 31h27v27H2z" fill="#39bdf8"/><path d="M31 31h27v27H31z" fill="#1ba8f0"/></svg></div>
      <div class="app"><svg class="app-icon" viewBox="0 0 60 60"><circle cx="26" cy="24" r="19" fill="#40585c" stroke="#dfe5e8" stroke-width="6"/><path d="M39 39l16 19" stroke="#dfe5e8" stroke-width="7" stroke-linecap="round"/></svg></div>
      <div class="app"><svg class="app-icon" viewBox="0 0 60 60"><rect x="6" y="18" width="34" height="40" rx="3" fill="#6a6a6a"/><rect x="20" y="2" width="36" height="40" rx="3" fill="#e8e8e8"/><rect x="20" y="18" width="20" height="24" fill="#a8a8a8"/></svg></div>
      <div class="app"><svg class="app-icon" viewBox="0 0 60 60"><path d="M18 8c3-5 14-6 16 0l8 28-14 14c-5 4-10 3-11-2z" fill="#2a8fe8"/><path d="M30 16c6-5 16-4 17 3l-3 24c-1 8-12 12-18 8l-8-6z" fill="#b05cd6"/><path d="M14 22c4-3 8-2 10 2l4 26c-4 6-12 4-14-2-3-8-4-20 0-26z" fill="#7fc242"/><path d="M26 36c6 0 14 0 18 2-2 10-12 14-18 12z" fill="#f08a5c"/></svg></div>
      <div class="app"><svg class="app-icon" viewBox="0 0 60 60"><path d="M2 2h20l5 8h31v48H2z" fill="#e0a500"/><path d="M2 12h56v46H2z" fill="#ffd75e"/><path d="M12 44q0-4 4-4h28q4 0 4 4v14H12z" fill="#0a7fd0"/><path d="M22 48h16" stroke="#bfe3f8" stroke-width="2"/></svg></div>
      <div class="app"><svg class="app-icon" viewBox="0 0 60 60"><path d="M30 2 58 26v26q0 6-6 6H20q-6 0-6-6V18z" fill="#1b8fd8"/><path d="M32 2l26 24-16 16-10-10z" fill="#0a63b4"/><path d="M20 40h34v12q0 6-6 6H26q-6 0-6-6z" fill="#28a8ea"/><rect x="2" y="16" width="30" height="36" rx="3" fill="#0a5eb8"/><circle cx="17" cy="34" r="8" fill="none" stroke="#fff" stroke-width="4"/></svg></div>
      <div class="app"><div class="dell-tile"><span class="dell-ring">DELL</span></div></div>
      <div class="app"><svg class="app-icon" viewBox="0 0 60 60"><path d="M30 0q24 0 28 30 0 28-28 30Q2 58 2 30 6 0 30 0z" fill="#6a7680"/><circle cx="30" cy="32" r="23" fill="#eceff1"/><path d="M30 32 20 16M30 32l12-20" stroke="#222" stroke-width="3.500"/><path d="M30 32v22" stroke="#d83a1a" stroke-width="2"/></svg></div>
      <div class="app"><svg class="app-icon" viewBox="0 0 60 60"><path d="M4 2l26 18L56 2v42L30 60 4 44zM14 20v20l16 10 16-10V20L30 32z" fill="#b5302a" fill-rule="evenodd"/></svg></div>
      <div class="app"><svg class="app-icon" viewBox="0 0 60 60"><path d="M52 6 60 30 36 58 20 36z" fill="#3b9dee"/><path d="M4 34l14-16 10 22-6 18z" fill="#1a5fc4"/></svg></div>
      <div class="app"><div class="k-tile">K</div></div>
      <div class="app"><svg class="app-icon" viewBox="0 0 60 60"><rect width="60" height="60" rx="8" fill="#3d4fe0"/><path d="M8 30 30 12v20l-14 18-8-6zM32 34l22-22v18L32 52z" fill="#fff"/><path d="M36 8l14-4v14L36 26z" fill="#c8d0ff"/></svg></div>
      <div class="app"><svg class="app-icon" viewBox="0 0 60 60"><path d="M6 0h50v60H6z" fill="#ffd500"/><path d="M30 26h26v34H30z" fill="#e8a300"/><path d="M30 26h26L38 60h-8z" fill="#4a4a4a"/></svg></div>
      <div class="app app-active">
        <svg class="app-icon" viewBox="0 0 60 60"><circle cx="30" cy="30" r="30" fill="#2ea043"/><path d="M30 0a30 30 0 0 1 26 15H30a15 15 0 0 0-14 10L5 14A30 30 0 0 1 30 0z" fill="#ea4335"/><path d="M56 15a30 30 0 0 1-26 45L44 36a15 15 0 0 0-1-21z" fill="#fbbc05"/><circle cx="30" cy="30" r="15" fill="#fff"/><circle cx="30" cy="30" r="11.500" fill="#2b7de9"/></svg>
        <svg class="app-profile" viewBox="0 0 36 44"><circle cx="18" cy="22" r="20" fill="#2a1a18"/><circle cx="18" cy="22" r="16" fill="none" stroke="#e6c8c4" stroke-width="3"/><circle cx="18" cy="17" r="5" fill="none" stroke="#e6c8c4" stroke-width="3"/><path d="M8 32c4-7 16-7 20 0" fill="none" stroke="#e6c8c4" stroke-width="3"/></svg>
        <i class="app-run"></i>
      </div>
      <div class="app">
        <svg class="app-icon" viewBox="0 0 60 60"><circle cx="30" cy="30" r="30" fill="#2ea043"/><path d="M30 0a30 30 0 0 1 26 15H30a15 15 0 0 0-14 10L5 14A30 30 0 0 1 30 0z" fill="#ea4335"/><path d="M56 15a30 30 0 0 1-26 45L44 36a15 15 0 0 0-1-21z" fill="#fbbc05"/><circle cx="30" cy="30" r="15" fill="#fff"/><circle cx="30" cy="30" r="11.500" fill="#2b7de9"/></svg>
        <svg class="app-profile app-profile-2" viewBox="0 0 36 44"><circle cx="18" cy="22" r="19" fill="#243038"/><circle cx="18" cy="22" r="15" fill="none" stroke="#c8d0d8" stroke-width="3"/><circle cx="18" cy="17" r="5" fill="none" stroke="#c8d0d8" stroke-width="3"/><path d="M8 31c4-6 16-6 20 0" fill="none" stroke="#c8d0d8" stroke-width="3"/></svg>
      </div>
      <div class="app"><svg class="app-icon" viewBox="0 0 60 60"><path d="M4 14h52v38q0 6-6 6H10q-6 0-6-6z" fill="#f3f3f3"/><path d="M18 14V6q0-3 3-3h18q3 0 3 3v8" fill="none" stroke="#18a9f0" stroke-width="4"/><rect x="19" y="24" width="10" height="10" fill="#e8532b"/><rect x="31" y="24" width="10" height="10" fill="#7db82e"/><rect x="19" y="36" width="10" height="10" fill="#18a0e8"/><rect x="31" y="36" width="10" height="10" fill="#fbb50a"/></svg></div>
      <div class="app">
        <svg class="app-icon" viewBox="0 0 60 60"><path d="M18 0h24l6 6h8l-4 18 4 12-22 22-4 2-4-2L4 36l4-12L4 6h8z" fill="#ff4a12"/><path d="M30 16l12-4 4 10-8 14 2 8-10 8-10-8 2-8-8-14 4-10z" fill="#fff"/><path d="M24 24l6 12 6-12-6 4z" fill="#ff4a12"/></svg>
        <i class="app-run app-run-dot"></i>
      </div>
      <div class="task-sep"></div>
      <div class="app">
        <svg class="app-icon" viewBox="0 0 60 60"><defs><linearGradient id="wps" x1="0" y1="0" x2="0" y2="1"><stop offset="0" stop-color="#f32a18"/><stop offset="1" stop-color="#ff6a00"/></linearGradient></defs><circle cx="30" cy="30" r="30" fill="url(#wps)"/><text class="wps-w" x="30" y="43">W</text></svg>
        <i class="app-run app-run-dot"></i>
      </div>
      <div class="app"><svg class="app-dots" viewBox="0 0 28 8"><circle cx="4" cy="4" r="3.200" fill="#fff"/><circle cx="14" cy="4" r="3.200" fill="#fff"/><circle cx="24" cy="4" r="3.200" fill="#fff"/></svg></div>
      <div class="task-sep"></div>
    </div>
    <div class="tray">
      <svg class="tray-caret" viewBox="0 0 26 16"><path d="M2 14 13 2l11 12" fill="none" stroke="#fff" stroke-width="2.600"/></svg>
      <svg class="tray-cloud" viewBox="0 0 42 28"><path d="M10 28a9 9 0 0 1-1-18C11 3 19 0 25 4c4 2 6 5 6 8a8 8 0 0 1 1 16z" fill="#e8ecec"/><path d="M25 4c4 2 6 5 6 8L20 14 15 5c3-2 7-3 10-1z" fill="#8fa0a0"/></svg>
      <svg class="tray-wifi" viewBox="0 0 38 30"><path d="M2 10c10-10 24-10 34 0M8 16c7-7 15-7 22 0M13 21c4-4 8-4 12 0" fill="none" stroke="#fff" stroke-width="2.600"/><circle cx="19" cy="26" r="3" fill="#fff"/></svg>
      <svg class="tray-vol" viewBox="0 0 32 30"><path d="M2 10h5l9-7v24l-9-7H2z" fill="none" stroke="#fff" stroke-width="2"/><path d="M20 9c3 4 3 8 0 12" fill="none" stroke="#fff" stroke-width="2"/><path d="M24 5c5 6 5 14 0 20M28 2c6 8 6 18 0 26" fill="none" stroke="#567" stroke-width="2"/></svg>
      <svg class="tray-batt" viewBox="0 0 42 26"><rect x="1.500" y="1.500" width="34" height="23" rx="5" fill="none" stroke="#fff" stroke-width="2.800"/><rect x="6" y="6" width="10" height="14" rx="1" fill="#fff"/><path d="M38 8q3 1 3 5t-3 5z" fill="#fff"/></svg>
      <div class="clock"><span>6:11 PM</span><span>4/14/2025</span></div>
    </div>
  </footer>

  <!-- windows notification -->
  <aside class="toast">
    <div class="toast-image"></div>
    <div class="toast-body">
      <div class="toast-head">
        <svg class="toast-app-icon" viewBox="0 0 40 34"><rect x="1" y="1" width="26" height="26" rx="3" fill="#eef0f2"/><path d="M3 3h22v5H3zM3 10h5v4H3zM3 16h5v4H3z" fill="#d8431c"/><path d="M12 12h18v16H14z" fill="#bcc3c9"/><circle cx="22" cy="32" r="3" fill="none" stroke="#1e9be8" stroke-width="2"/><circle cx="36" cy="21" r="3" fill="none" stroke="#1e9be8" stroke-width="2"/><path d="M20 30 33 22M24 18l6 10" stroke="#1e9be8" stroke-width="1.600"/></svg>
        <span class="toast-app">Snipping Tool</span>
        <span class="toast-more">···</span>
        <svg class="toast-x" viewBox="0 0 24 24"><path d="M2 2l20 20M22 2 2 22" stroke="#e8e8e8" stroke-width="1.800"/></svg>
      </div>
      <div class="toast-title">Screenshot copied to clipboard</div>
      <div class="toast-text">Automatically saved to screenshots folder.</div>
      <div class="toast-btn">Markup and share</div>
    </div>
  </aside>

</body>
</html>
```

FILE: styles.css
```css
/* Base styles */
* {
  margin: 0;
  padding: 0;
  box-sizing: border-box;
}

html, body {
  width: 3200px;
  height: 2000px;
  overflow: hidden;
}

body {
  position: relative;
  display: flex;
  flex-direction: column;
  font-family: "Open Sans", "Noto Sans", sans-serif;
  color: #333;
  background: #fff;
}

.sprites {
  position: absolute;
  width: 0;
  height: 0;
}

/* Browser tabs */
.tabstrip {
  flex: none;
  height: 100px;
  display: flex;
  align-items: center;
  background: #2f1b19;
  padding-left: 15px;
}

.tab-menu {
  width: 70px;
  height: 70px;
  border-radius: 24px;
  background: #4e3636;
  display: flex;
  align-items: center;
  justify-content: center;
  margin-right: 9px;
}

.tab-menu-chev {
  width: 20px;
  height: 14px;
}

.tab {
  width: 594px;
  height: 100px;
  display: flex;
  align-items: center;
  gap: 25px;
  padding: 0 36px 0 26px;
  color: #e6d5d2;
  position: relative;
}

.tab::after {
  content: "";
  position: absolute;
  right: 0;
  top: 30px;
  height: 40px;
  width: 2px;
  background: #5a4745;
}

.tab-last {
  width: 603px;
  padding-right: 46px;
}

.tab-last::after {
  display: none;
}

.tab-active {
  width: 580px;
  height: 85px;
  margin-top: 15px;
  padding: 0 30px 15px 22px;
  background: #4e3636;
  border-radius: 26px 26px 0 0;
  color: #fff;
  gap: 21px;
}

.tab-active::before,
.tab-active::after {
  content: "";
  position: absolute;
  top: auto;
  bottom: 0;
  width: 24px;
  height: 24px;
}

.tab-active::before {
  left: -24px;
  background: radial-gradient(circle at 0 0, transparent 23.500px, #4e3636 24.500px);
}

.tab-active::after {
  right: -24px;
  background: radial-gradient(circle at 100% 0, transparent 23.500px, #4e3636 24.500px);
}

.favicon {
  flex: none;
  width: 36px;
  height: 40px;
}

.tab-title {
  flex: 1;
  font-size: 28.400px;
  white-space: nowrap;
  overflow: hidden;
}

.tab-fade {
  -webkit-mask-image: linear-gradient(to right, #000 88%, transparent 100%);
  mask-image: linear-gradient(to right, #000 88%, transparent 100%);
}

.tab-close {
  flex: none;
  width: 22px;
  height: 22px;
}

.tab-new {
  width: 28px;
  height: 28px;
  margin-left: 36px;
}

.win-controls {
  margin-left: auto;
  display: flex;
  gap: 86px;
  padding-right: 44px;
}

.win-btn {
  width: 28px;
  height: 28px;
}

/* Browser toolbar */
.urlbar {
  flex: none;
  height: 118px;
  display: flex;
  align-items: center;
  background: #4e3636;
  border-bottom: 2px solid #5c4a48;
  border-radius: 14px 14px 0 0;
  padding-left: 38px;
}

.nav-btn {
  width: 34px;
  height: 34px;
  margin-right: 56px;
}

.omnibox {
  width: 2554px;
  height: 85px;
  margin-left: -9px;
  border-radius: 43px;
  background: #2f1b19;
  display: flex;
  align-items: center;
  padding-left: 12px;
}

.site-chip {
  width: 60px;
  height: 60px;
  border-radius: 50%;
  background: #4e3636;
  display: flex;
  align-items: center;
  justify-content: center;
  flex: none;
}

.site-chip-icon {
  width: 30px;
  height: 30px;
}

.url-text {
  margin-left: 20px;
  font-size: 33.100px;
  color: #e6d5d2;
  white-space: nowrap;
}

.star {
  width: 38px;
  height: 38px;
  margin-left: auto;
  margin-right: 41px;
}

.ext-icon {
  width: 38px;
  height: 38px;
  margin-left: 49px;
}

.urlbar-sep {
  width: 2px;
  height: 40px;
  background: #7a6664;
  margin-left: 45px;
}

.profile-icon {
  width: 40px;
  height: 40px;
  margin-left: 47px;
}

.dots-icon {
  width: 10px;
  height: 40px;
  margin-left: 65px;
}

/* App header */
.appbar {
  flex: none;
  height: 100px;
  display: flex;
  align-items: center;
  background: #fafafa;
  padding-left: 12px;
}

.logo-mark {
  width: 48px;
  height: 54px;
}

.logo-word {
  margin-left: 18px;
  font-size: 43px;
  color: #666;
  letter-spacing: -0.500px;
}

.burger {
  width: 42px;
  height: 38px;
  margin-left: 34px;
}

.doc-title {
  margin-left: 26px;
  font-size: 53.400px;
  font-weight: 700;
  color: #333;
  white-space: nowrap;
}

.doc-branch {
  margin-left: 20px;
  margin-top: 6px;
  font-size: 38.500px;
  color: #aaa;
}

.link-icon {
  width: 36px;
  height: 36px;
  margin-left: 28px;
}

.cap-icon {
  width: 40px;
  height: 36px;
  margin-left: 83px;
  margin-top: -6px;
}

.app-actions {
  margin-left: auto;
  display: flex;
  align-items: center;
  padding-right: 18px;
}

.hdr-icon {
  display: block;
  width: 46px;
  height: 46px;
  margin-left: 33px;
}

.bell-wrap {
  position: relative;
}

.bell-badge {
  position: absolute;
  left: 54px;
  top: -18px;
  width: 40px;
  height: 40px;
  border-radius: 6px;
  background: #2e50a6;
  color: #fff;
  font-size: 27px;
  font-weight: 700;
  line-height: 40px;
  text-align: center;
}

.share-btn {
  width: 146px;
  height: 82px;
  margin-left: 29px;
  border-radius: 14px;
  background: #a9b6d9;
  color: #fff;
  font-size: 35px;
  line-height: 80px;
  text-align: center;
}

.help-icon {
  width: 46px;
  height: 46px;
  margin-left: 27px;
}

.caret {
  display: block;
  width: 0;
  height: 0;
  border-left: 9px solid transparent;
  border-right: 9px solid transparent;
  border-top: 11px solid #333;
}

.caret-help {
  margin-left: 21px;
}

.avatar {
  width: 60px;
  height: 60px;
  margin-left: 31px;
}

.user-name {
  margin-left: 13px;
  font-size: 33.500px;
  color: #333;
}

.caret-user {
  margin-left: 20px;
  margin-top: -8px;
}

/* Main area */
.main {
  flex: 1;
  min-height: 0;
  display: flex;
}

.rail {
  flex: none;
  width: 100px;
  display: flex;
  flex-direction: column;
  align-items: center;
  background: #fafafa;
  border-top: 2px solid #d8d8d8;
  border-right: 2px solid #d8d8d8;
}

.rail-top {
  display: flex;
  flex-direction: column;
  align-items: center;
  gap: 42px;
  padding-top: 22px;
  height: 350px;
  width: 100%;
  border-bottom: 2px solid #ddd;
}

.rail-mid {
  padding-top: 22px;
}

.rail-icon {
  display: block;
  width: 50px;
  height: 46px;
}

.rail-search {
  width: 46px;
  height: 54px;
  margin-top: auto;
  margin-bottom: -69px;
  position: relative;
  z-index: 2;
}

.studio {
  flex: 1;
  min-width: 0;
  display: flex;
  flex-direction: column;
}

/* Feature toolbar */
.toolbar {
  flex: none;
  height: 91px;
  display: flex;
  align-items: center;
  background: #fff;
  padding-bottom: 2px;
}

.tb-undo {
  width: 36px;
  height: 36px;
  margin-left: 24px;
}

.tb-redo {
  transform: scaleX(-1);
  margin-left: 51px;
}

.tb-sep {
  flex: none;
  width: 5px;
  height: 65px;
  background: #d6d6d6;
  margin-left: 7px;
  margin-right: 3px;
}

.tb-sep-first {
  margin-left: 27px;
  margin-right: 0;
}

.tb-sep-a { margin-right: 0; }
.tb-sep-b { margin-left: 4px; margin-right: 0; }
.tb-sep-c { margin-left: 0; }

.tb-sketch-icon {
  width: 50px;
  height: 48px;
  margin-left: 23px;
}

.tb-sketch-label {
  margin-left: 10px;
  margin-right: 24px;
  font-size: 33.500px;
  color: #333;
}

.tb-btn {
  flex: none;
  width: 85px;
  height: 50px;
  display: flex;
  align-items: center;
  justify-content: center;
}

.tb-gap-3 { margin-left: 3px; }
.tb-gap-6 { margin-left: 6px; }
.tb-gap-8 { margin-left: 8px; }
.tb-gap-9 { margin-left: 9px; }

.tb-icon {
  width: 46px;
  height: 46px;
}

.tb-drop {
  flex: none;
  width: 40px;
  display: flex;
  justify-content: center;
}

.tb-drop-s {
  width: 34px;
}

.tb-chev {
  width: 26px;
  height: 16px;
}

.tb-e3 {
  width: 48px;
  height: 48px;
  border: 2px solid #bbb;
  border-bottom-width: 4px;
  border-radius: 6px;
  font-size: 26px;
  line-height: 42px;
  text-align: center;
  color: #333;
  background: #fff;
}

.search-tools {
  margin-left: 33px;
  width: 399px;
  height: 80px;
  display: flex;
  align-items: center;
  gap: 3px;
  padding-left: 25px;
  background: #eee;
  border-radius: 10px;
  font-size: 33px;
  color: #333;
  white-space: nowrap;
}

.kbd {
  width: 40px;
  height: 46px;
  border: 2px solid #b5b5b5;
  border-bottom-width: 5px;
  border-radius: 5px;
  font-size: 26px;
  line-height: 38px;
  text-align: center;
  color: #444;
}

.kbd-wide {
  width: 80px;
  margin-left: 7px;
}

/* Feature panel and viewport */
.workspace {
  flex: 1;
  min-height: 0;
  display: flex;
}

.panel {
  flex: none;
  width: 515px;
  position: relative;
  display: flex;
  flex-direction: column;
  background: #fff;
  border-top: 2px solid #d0d0d0;
  border-right: 2px solid #d0d0d0;
}

.panel-filter {
  display: flex;
  align-items: center;
  height: 94px;
  padding: 20px 0 0 27px;
}

.filter-icon {
  width: 38px;
  height: 36px;
}

.filter-input {
  margin-left: 33px;
  width: 394px;
  height: 74px;
  border: 2px solid #bbb;
  border-radius: 6px;
  padding-left: 15px;
  font-size: 32px;
  line-height: 68px;
  font-style: italic;
  color: #777;
}

.panel-head {
  display: flex;
  align-items: center;
  height: 71px;
  padding: 4px 0 0 10px;
}

.panel-head-title {
  width: 255px;
  font-size: 32px;
  font-weight: 600;
  color: #333;
}

.folder-icon {
  width: 46px;
  height: 34px;
}

.pause-icon {
  width: 30px;
  height: 34px;
  margin-left: 37px;
}

.timer-icon {
  width: 40px;
  height: 44px;
  margin-left: 40px;
  margin-top: -6px;
}

.tree {
  height: 740px;
  position: relative;
  display: flex;
  overflow: hidden;
  border-bottom: 2px solid #ccc;
  margin-right: 14px;
}

.tree-scroll {
  flex: 1;
  position: relative;
  overflow: hidden;
}

.row {
  height: 65px;
  display: flex;
  align-items: center;
  padding-left: 15px;
  font-size: 31.300px;
  color: #333;
  white-space: nowrap;
  position: relative;
  flex: none;
}

.row-group span {
  margin-left: 14px;
}

.row-chev {
  width: 30px;
  height: 18px;
  margin-left: -4px;
  margin-right: 3px;
}

.row-child {
  padding-left: 63px;
}

.row-icon {
  flex: none;
  width: 38px;
  height: 36px;
  margin-right: 12px;
}

.row-child .row-icon {
  margin-right: 11px;
}

.row-origin {
  flex: none;
  width: 16px;
  height: 16px;
  margin: 0 22px 0 11px;
}

.row-dim {
  color: #999;
}

.minus-badge {
  position: absolute;
  left: 32px;
  top: 30px;
  width: 30px;
  height: 30px;
  border-radius: 50%;
  background: #2e50a6;
}

.minus-badge::after {
  content: "";
  position: absolute;
  left: 7px;
  top: 13px;
  width: 16px;
  height: 4px;
  background: #fff;
}

.guide {
  position: absolute;
  left: 22px;
  top: 65px;
  width: 26px;
  height: 257px;
  border-left: 2px solid #d0d0d0;
}

.guide::after {
  content: "";
  position: absolute;
  left: -11px;
  bottom: 0;
  width: 24px;
  height: 2px;
  background: #d0d0d0;
}

.scrollbar {
  flex: none;
  width: 37px;
  position: relative;
  background: #fafafa;
}

.scrollbar i {
  position: absolute;
  display: block;
}

.scroll-up {
  left: 7px;
  top: 11px;
  border-left: 12px solid transparent;
  border-right: 12px solid transparent;
  border-bottom: 14px solid #888;
}

.scroll-down {
  left: 7px;
  bottom: 10px;
  border-left: 12px solid transparent;
  border-right: 12px solid transparent;
  border-top: 14px solid #888;
}

.scroll-thumb {
  left: 7px;
  top: 44px;
  width: 22px;
  height: 283px;
  border-radius: 11px;
  background: #8c8c8c;
}

.parts {
  padding-top: 2px;
}

.panel-toggle {
  position: absolute;
  left: 511px;
  top: 632px;
  width: 82px;
  height: 84px;
  border: 2px solid #c4c4c4;
  border-left: 0;
  background: #fff;
  display: flex;
  align-items: center;
  justify-content: center;
  z-index: 2;
}

.panel-toggle-icon {
  width: 42px;
  height: 28px;
}

.viewport {
  flex: 1;
  min-width: 0;
  position: relative;
  background: #fff;
  overflow: hidden;
}

.scene {
  position: absolute;
  inset: 0;
  width: 100%;
  height: 100%;
}

.front-label {
  font-size: 62px;
  font-weight: 500;
  fill: #4a66c0;
}

.gizmo-z, .gizmo-x, .gizmo-y {
  font-size: 30px;
  font-weight: 600;
}

.gizmo-z { fill: #3f3fd0; }
.gizmo-x { fill: #c04a44; }
.gizmo-y { fill: #8cc87c; font-size: 24px; }

.gizmo-front {
  font-size: 30px;
  font-weight: 500;
  fill: #444;
}

.side-a {
  font-size: 30px;
  font-weight: 700;
  fill: #333;
  text-decoration: underline;
}

.wps-w {
  font-family: "Liberation Sans", sans-serif;
  font-size: 38px;
  font-weight: 700;
  fill: #fff;
  text-anchor: middle;
}

.side-stack {
  position: absolute;
  right: 0;
  top: 469px;
  width: 78px;
  background: #fff;
}

.side-btn {
  height: 83px;
  border: 2px solid #c4c4c4;
  border-right: 0;
  border-bottom-width: 1px;
  display: flex;
  align-items: center;
  padding-left: 14px;
  background: #fff;
}

.side-icon {
  width: 50px;
  height: 42px;
}

.side-var {
  font-size: 34px;
  font-weight: 700;
  justify-content: flex-end;
  padding-right: 12px;
}

/* Document tabs */
.doc-tabs {
  flex: none;
  height: 74px;
  display: flex;
  gap: 5px;
  background: #d4d4d4;
  border-top: 1px solid #ddd;
  margin-left: 100px;
  position: relative;
}

.doc-tabs::before {
  content: "";
  position: absolute;
  left: -100px;
  top: -1px;
  bottom: 0;
  width: 100px;
  background: #fafafa;
}

.doc-add {
  width: 93px;
  display: flex;
  align-items: center;
  justify-content: center;
  padding: 0 12px 2px 0;
}

.doc-add-icon {
  width: 38px;
  height: 38px;
}

.doc-tab {
  width: 388px;
  height: 67px;
  display: flex;
  align-items: center;
  gap: 11px;
  padding-left: 30px;
  background: #e8e8e8;
  border-radius: 0 0 14px 14px;
  box-shadow: 0 2px 3px rgba(0, 0, 0, 0.15);
  font-size: 32.500px;
  color: #666;
  white-space: nowrap;
}

.doc-tab-base {
  width: 262px;
}

.doc-tab-on {
  height: 71px;
  background: #fff;
  color: #333;
  border-bottom: 5px solid #2e50a6;
}

.doc-tab-asm {
  width: 370px;
}

.doc-icon {
  flex: none;
  width: 42px;
  height: 46px;
}

/* Taskbar */
.taskbar {
  flex: none;
  height: 120px;
  display: flex;
  align-items: center;
  background: #1a2b2f;
  border-top: 3px solid #3c4c4c;
  position: relative;
}

.weather {
  position: absolute;
  left: 55px;
  top: 14px;
  width: 70px;
  height: 74px;
}

.weather-icon {
  position: absolute;
  left: 0;
  top: 14px;
  width: 64px;
  height: 74px;
}

.weather-badge {
  position: absolute;
  left: 24px;
  top: 0;
  width: 40px;
  height: 40px;
  border-radius: 50%;
  background: #ffa0a8;
  color: #111;
  font-size: 24px;
  line-height: 40px;
  text-align: center;
}

.task-apps {
  margin-left: 372px;
  display: flex;
  align-items: stretch;
  height: 117px;
}

.app {
  position: relative;
  width: 110px;
  display: flex;
  align-items: center;
  justify-content: center;
  padding-bottom: 2px;
}

.app-active::before {
  content: "";
  position: absolute;
  left: 5px;
  right: 5px;
  top: 7px;
  bottom: 7px;
  background: #2b3d45;
  border-radius: 10px;
}

.app-icon {
  position: relative;
  width: 60px;
  height: 60px;
}

.app-dots {
  width: 28px;
  height: 8px;
}

.dell-tile {
  width: 60px;
  height: 60px;
  background: #0672cb;
  display: flex;
  align-items: center;
  justify-content: center;
}

.dell-ring {
  width: 50px;
  height: 50px;
  border: 3px solid #fff;
  border-radius: 50%;
  color: #fff;
  font-size: 13px;
  font-weight: 700;
  line-height: 44px;
  text-align: center;
}

.k-tile {
  width: 60px;
  height: 60px;
  border-radius: 8px;
  background: linear-gradient(135deg, #1db7d8, #1c2b50 70%);
  color: #fff;
  font-size: 54px;
  line-height: 60px;
  text-align: center;
  font-weight: 400;
}

.app-profile {
  position: absolute;
  left: 52px;
  top: 15px;
  width: 36px;
  height: 44px;
}

.app-profile-2 {
  left: 48px;
  top: 25px;
  width: 28px;
  height: 36px;
}

.app-run {
  position: absolute;
  left: 35px;
  bottom: 6px;
  width: 40px;
  height: 9px;
  border-radius: 4px;
  background: #dda0e6;
}

.app-run-dot {
  left: 50px;
  width: 10px;
  background: #93a0a4;
}

.task-sep {
  flex: none;
  width: 2px;
  background: #c4cacb;
  margin: 0 4px 0 8px;
}

.tray {
  flex: 1;
  display: flex;
  align-items: center;
  position: relative;
  padding-left: 175px;
  color: #fff;
}

.tray-caret {
  width: 26px;
  height: 16px;
}

.tray-cloud {
  width: 42px;
  height: 28px;
  margin-left: 46px;
}

.tray-wifi {
  width: 38px;
  height: 30px;
  margin-left: 38px;
}

.tray-vol {
  width: 32px;
  height: 30px;
  margin-left: 20px;
}

.tray-batt {
  width: 42px;
  height: 26px;
  margin-left: 32px;
}

.clock {
  margin-left: auto;
  padding-right: 50px;
  display: flex;
  flex-direction: column;
  align-items: flex-end;
  gap: 8px;
  font-size: 29px;
  line-height: 32px;
}

/* Notification */
.toast {
  position: absolute;
  left: 2250px;
  top: 1005px;
  width: 910px;
  height: 838px;
  border-radius: 16px;
  overflow: hidden;
  box-shadow: 0 6px 26px rgba(0, 0, 0, 0.35);
  display: flex;
  flex-direction: column;
  z-index: 5;
}

.toast-image {
  height: 450px;
  background: linear-gradient(100deg, #fff 16%, #f1f3f8 38%, #d4ddec 60%, #bccbe3 78%, #cfd9ea 100%);
}

.toast-body {
  flex: 1;
  background: #2b2b2b;
  padding: 0 40px;
  color: #fff;
}

.toast-head {
  height: 62px;
  margin-top: 24px;
  display: flex;
  align-items: center;
  font-size: 28.800px;
}

.toast-app-icon {
  width: 40px;
  height: 34px;
}

.toast-app {
  margin-left: 20px;
}

.toast-more {
  margin-left: auto;
  font-size: 30px;
  letter-spacing: 1px;
  margin-right: 74px;
}

.toast-x {
  width: 24px;
  height: 24px;
  margin-right: 15px;
}

.toast-title {
  margin-top: 42px;
  font-size: 33.300px;
  line-height: 46px;
}

.toast-text {
  font-size: 33px;
  line-height: 46px;
  color: #c4c4c4;
}

.toast-btn {
  margin-top: 51px;
  height: 78px;
  border: 2px solid #454545;
  border-radius: 8px;
  background: #373737;
  font-size: 32.700px;
  line-height: 72px;
  text-align: center;
}
```
